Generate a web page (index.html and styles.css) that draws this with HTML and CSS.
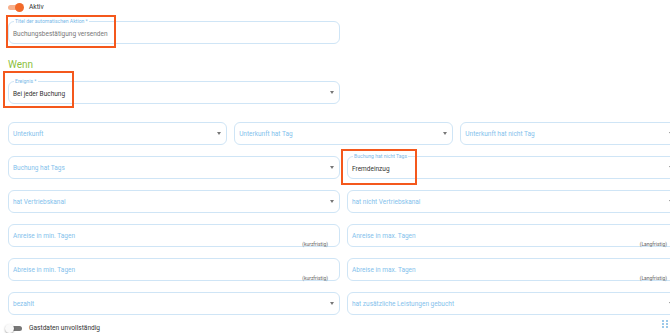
FILE: index.html
```html
<!DOCTYPE html>
<html lang="de">
<head>
    <meta charset="UTF-8">
    <meta name="viewport" content="width=device-width, initial-scale=1.0">
    <title>Automatische Aktion</title>
    <link rel="stylesheet" href="styles.css">
</head>
<body>
    <div class="page">
        <div class="switch-row">
            <span class="switch on"><span class="knob"></span></span>
            <span class="switch-label">Aktiv</span>
        </div>

        <div class="field wide title-field">
            <span class="label">Titel der automatischen Aktion *</span>
            <span class="value muted">Buchungsbestätigung versenden</span>
            <span class="mark mark-title"></span>
        </div>

        <h2 class="section">Wenn</h2>

        <div class="field wide select">
            <span class="label">Ereignis *</span>
            <span class="value">Bei jeder Buchung</span>
            <span class="arrow"></span>
            <span class="mark mark-event"></span>
        </div>

        <div class="grid3">
            <div class="field select"><span class="placeholder">Unterkunft</span><span class="arrow"></span></div>
            <div class="field select"><span class="placeholder">Unterkunft hat Tag</span><span class="arrow"></span></div>
            <div class="field select"><span class="placeholder">Unterkunft hat nicht Tag</span><span class="arrow"></span></div>
        </div>

        <div class="grid2">
            <div class="field select"><span class="placeholder">Buchung hat Tags</span><span class="arrow"></span></div>
            <div class="field select">
                <span class="label">Buchung hat nicht Tags</span>
                <span class="value">Fremdeinzug</span>
                <span class="arrow"></span>
                <span class="mark mark-tags"></span>
            </div>

            <div class="field select"><span class="placeholder">hat Vertriebskanal</span><span class="arrow"></span></div>
            <div class="field select"><span class="placeholder">hat nicht Vertriebskanal</span><span class="arrow"></span></div>

            <div class="field"><span class="placeholder">Anreise in min. Tagen</span><span class="hint">(kurzfristig)</span></div>
            <div class="field"><span class="placeholder">Anreise in max. Tagen</span><span class="hint">(Langfristig)</span></div>

            <div class="field"><span class="placeholder">Abreise in min. Tagen</span><span class="hint">(kurzfristig)</span></div>
            <div class="field"><span class="placeholder">Abreise in max. Tagen</span><span class="hint">(Langfristig)</span></div>

            <div class="field select"><span class="placeholder">bezahlt</span><span class="arrow"></span></div>
            <div class="field select"><span class="placeholder">hat zusätzliche Leistungen gebucht</span><span class="arrow"></span></div>
        </div>

        <div class="switch-row bottom">
            <span class="switch"><span class="knob"></span></span>
            <span class="switch-label">Gastdaten unvollständig</span>
            <span class="drag">
                <i></i><i></i><i></i><i></i><i></i><i></i>
            </span>
        </div>
    </div>
</body>
</html>
```

FILE: styles.css
```css
html, body {
    margin: 0;
    padding: 0;
    background: #fff;
    overflow: hidden;
}
body {
    font-family: Roboto, "Liberation Sans", sans-serif;
    color: #333;
}
.page {
    width: 671px;
    padding: 0 0 0 8px;
}

/* switches */
.switch-row {
    display: flex;
    align-items: center;
    height: 14px;
    gap: 5px;
}
.switch {
    position: relative;
    width: 14px;
    height: 5px;
    border-radius: 3px;
    background: #777;
}
.switch .knob {
    position: absolute;
    top: -2px;
    left: -3px;
    width: 9px;
    height: 9px;
    border-radius: 50%;
    background: #fafafa;
    box-shadow: 0 1px 2px rgba(0,0,0,0.35);
}
.switch.on {
    background: #f8b08c;
}
.switch.on .knob {
    left: 7px;
    background: #f26a2a;
    box-shadow: none;
}
.switch-label {
    font-size: 6.6px;
    color: #333;
    margin-left: 2px;
}
.switch-row.bottom {
    margin-top: 7px;
    height: 12px;
    padding-right: 11px;
}
.drag {
    margin-left: auto;
    display: grid;
    grid-template-columns: 2px 2px;
    gap: 1px 2px;
    margin-top: -8px;
}
.drag i {
    width: 2px;
    height: 2px;
    background: #9cc9ea;
}

/* section */
.section {
    margin: 15px 0 10px;
    font-size: 10px;
    line-height: 12px;
    font-weight: 400;
    color: #8dbf3c;
}

/* fields */
.field {
    position: relative;
    box-sizing: border-box;
    height: 23px;
    border: 1px solid #cfe5f6;
    border-radius: 6px;
    display: flex;
    align-items: center;
    padding: 0 5px 0 4px;
    font-size: 6.5px;
}
.field.wide {
    width: 332px;
}
.title-field {
    margin-top: 7px;
}
.label {
    position: absolute;
    top: -4px;
    left: 5px;
    padding: 0 1px;
    background: #fff;
    font-size: 5.1px;
    line-height: 6px;
    color: #7ab9e8;
}
.value {
    color: #333;
    padding-top: 2px;
}
.value.muted {
    color: #777;
}
.placeholder {
    color: #84bfec;
}
.arrow {
    margin-left: auto;
    width: 0;
    height: 0;
    border-left: 2.5px solid transparent;
    border-right: 2.5px solid transparent;
    border-top: 3px solid #777;
}
.hint {
    position: absolute;
    right: 11px;
    bottom: -1px;
    font-size: 5px;
    color: #666;
}

/* grids */
.grid3 {
    display: grid;
    grid-template-columns: repeat(3, 1fr);
    column-gap: 7.5px;
    margin-top: 18px;
}
.grid2 {
    display: grid;
    grid-template-columns: 332px 332px;
    column-gap: 7px;
    row-gap: 11px;
    margin-top: 11px;
}

/* annotation boxes */
.mark {
    position: absolute;
    border: 2px solid #f4581c;
    pointer-events: none;
}
.mark-title {
    left: -3px;
    top: -7px;
    width: 106px;
    height: 29px;
}
.mark-event {
    left: -6px;
    top: -11px;
    width: 67px;
    height: 33px;
}
.mark-tags {
    left: -7px;
    top: -8px;
    width: 72px;
    height: 32px;
}
```
